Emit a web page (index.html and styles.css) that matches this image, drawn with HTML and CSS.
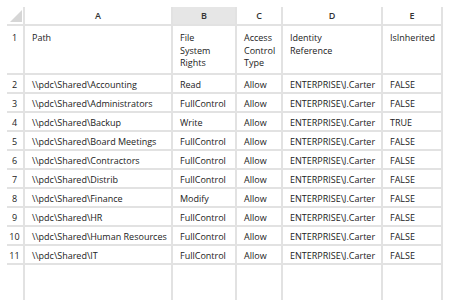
FILE: index.html
```html
<!DOCTYPE html>
<html>
<head>
<meta charset="utf-8">
<link rel="stylesheet" href="styles.css">
</head>
<body>
<div class="sheet">
  <div class="hd corner"><span class="tri"></span></div>
  <div class="hd col">A</div>
  <div class="hd col sel">B</div>
  <div class="hd col">C</div>
  <div class="hd col">D</div>
  <div class="hd col">E</div>

  <div class="rn tall">1</div>
  <div class="c tall">Path</div>
  <div class="c tall">File<br>System<br>Rights</div>
  <div class="c tall">Access<br>Control<br>Type</div>
  <div class="c tall">Identity<br>Reference</div>
  <div class="c tall">IsInherited</div>

  <div class="rn">2</div><div class="c">\\pdc\Shared\Accounting</div><div class="c">Read</div><div class="c">Allow</div><div class="c">ENTERPRISE\J.Carter</div><div class="c">FALSE</div>
  <div class="rn">3</div><div class="c">\\pdc\Shared\Administrators</div><div class="c">FullControl</div><div class="c">Allow</div><div class="c">ENTERPRISE\J.Carter</div><div class="c">FALSE</div>
  <div class="rn">4</div><div class="c">\\pdc\Shared\Backup</div><div class="c">Write</div><div class="c">Allow</div><div class="c">ENTERPRISE\J.Carter</div><div class="c">TRUE</div>
  <div class="rn">5</div><div class="c">\\pdc\Shared\Board Meetings</div><div class="c">FullControl</div><div class="c">Allow</div><div class="c">ENTERPRISE\J.Carter</div><div class="c">FALSE</div>
  <div class="rn">6</div><div class="c">\\pdc\Shared\Contractors</div><div class="c">FullControl</div><div class="c">Allow</div><div class="c">ENTERPRISE\J.Carter</div><div class="c">FALSE</div>
  <div class="rn">7</div><div class="c">\\pdc\Shared\Distrib</div><div class="c">FullControl</div><div class="c">Allow</div><div class="c">ENTERPRISE\J.Carter</div><div class="c">FALSE</div>
  <div class="rn">8</div><div class="c">\\pdc\Shared\Finance</div><div class="c">Modify</div><div class="c">Allow</div><div class="c">ENTERPRISE\J.Carter</div><div class="c">FALSE</div>
  <div class="rn">9</div><div class="c">\\pdc\Shared\HR</div><div class="c">FullControl</div><div class="c">Allow</div><div class="c">ENTERPRISE\J.Carter</div><div class="c">FALSE</div>
  <div class="rn">10</div><div class="c">\\pdc\Shared\Human Resources</div><div class="c">FullControl</div><div class="c">Allow</div><div class="c">ENTERPRISE\J.Carter</div><div class="c">FALSE</div>
  <div class="rn">11</div><div class="c">\\pdc\Shared\IT</div><div class="c">FullControl</div><div class="c">Allow</div><div class="c">ENTERPRISE\J.Carter</div><div class="c">FALSE</div>

  <div class="e"></div><div class="e"></div><div class="e"></div><div class="e"></div><div class="e"></div><div class="e"></div>
</div>
</body>
</html>
```

FILE: styles.css
```css
html, body {
  margin: 0;
  padding: 0;
  background: #ffffff;
  overflow: hidden;
}
body {
  font-family: "Open Sans", "Liberation Sans", sans-serif;
  font-size: 9px;
  color: #222222;
}
.sheet {
  display: grid;
  grid-template-columns: 18px 148px 64px 46px 100px 60px;
  grid-template-rows: 19px 49px repeat(10, 19px) 40px;
  padding: 7px 0 0 7px;
}
.hd {
  border-right: 2px solid #e2e2e2;
  border-bottom: 2px solid #e2e2e2;
  box-sizing: border-box;
  display: flex;
  align-items: center;
  justify-content: center;
  font-weight: 600;
  color: #333333;
}
.corner {
  position: relative;
}
.tri {
  position: absolute;
  left: 3px;
  top: 3px;
  width: 12px;
  height: 12px;
  background: #d6d6d6;
  clip-path: polygon(0 100%, 100% 0, 100% 100%);
}
.sel {
  background: #e6e6e6;
}
.rn, .c, .e {
  border-bottom: 2px solid #e2e2e2;
  border-right: 2px solid #e2e2e2;
  box-sizing: border-box;
}
.rn {
  display: flex;
  align-items: center;
  justify-content: center;
  padding-right: 1px;
  padding-top: 2px;
}
.c {
  display: flex;
  align-items: center;
  padding-left: 7px;
  padding-top: 2px;
  white-space: nowrap;
  overflow: hidden;
}
.rn.tall, .c.tall {
  align-items: flex-start;
  padding-top: 6px;
  line-height: 12.5px;
}
.e {
  border-bottom: none;
}
```
